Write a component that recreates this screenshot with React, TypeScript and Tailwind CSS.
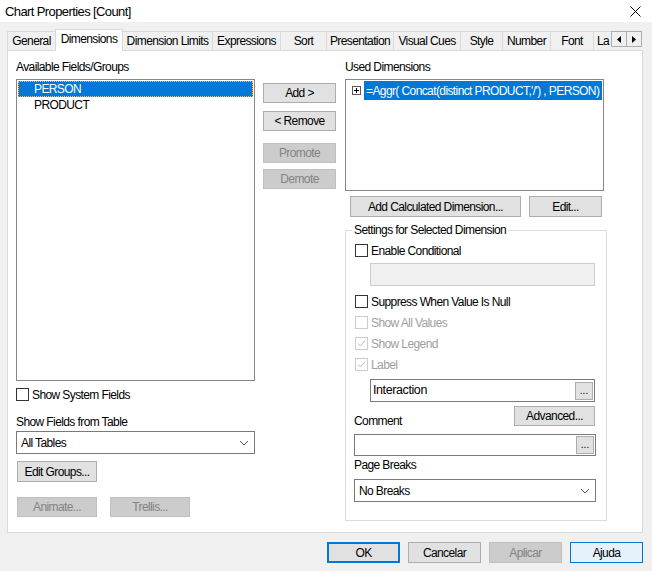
import React from 'react';

const Btn = ({ label, className = '', disabled = false }: { label: string; className?: string; disabled?: boolean }) => (
    <div
        className={`flex items-center justify-center border leading-none ${
            disabled ? 'bg-[#cccccc] border-[#bfbfbf] text-[#838383]' : 'bg-[#e1e1e1] border-[#adadad] text-black'
        } ${className}`}
    >
        {label}
    </div>
);

const Check = ({ label, checked = false, disabled = false, className = '' }: { label: string; checked?: boolean; disabled?: boolean; className?: string }) => (
    <div className={`flex items-center h-[13px] ${className}`}>
        <div
            className={`w-[13px] h-[13px] border bg-white flex items-center justify-center ${
                disabled ? 'border-[#cccccc]' : 'border-[#333333]'
            }`}
        >
            {checked && (
                <svg width="9" height="9" viewBox="0 0 9 9">
                    <path d="M1 4.5 L3.5 7 L8 1.5" fill="none" stroke={disabled ? '#b8b8b8' : '#000'} strokeWidth="1" />
                </svg>
            )}
        </div>
        <span className={`ml-[3px] leading-none ${disabled ? 'text-[#a0a0a0]' : 'text-black'}`}>{label}</span>
    </div>
);

const Chevron = () => (
    <svg width="10" height="6" viewBox="0 0 10 6">
        <path d="M1 1 L5 5 L9 1" fill="none" stroke="#555" strokeWidth="1" />
    </svg>
);

const Tab = ({ label, w, selected = false }: { label: string; w: string; selected?: boolean }) => (
    <div
        className={`-ml-px first:ml-0 flex items-center justify-center whitespace-nowrap border border-b-0 border-[#d9d9d9] ${w} ${
            selected ? 'h-[22px] bg-white -mb-px relative z-10 pb-[3px]' : 'h-[19px] bg-[#f0f0f0]'
        }`}
    >
        {label}
    </div>
);

const Arrow = ({ dir }: { dir: 'l' | 'r' }) => (
    <div className="w-[16px] h-[16px] border border-[#adadad] bg-[#f0f0f0] -ml-px first:ml-0 flex items-center justify-center">
        <svg width="4" height="7" viewBox="0 0 4 7">
            <path d={dir === 'l' ? 'M4 0 L0 3.5 L4 7 Z' : 'M0 0 L4 3.5 L0 7 Z'} fill="#000" />
        </svg>
    </div>
);

const DotsBtn = () => (
    <div className="w-[18px] h-[18px] border border-[#adadad] bg-[#e1e1e1] flex items-end justify-center pb-[3px] text-[10px] tracking-normal leading-none">
        ...
    </div>
);

export default function App() {
    return (
        <div className="w-[652px] h-[571px] bg-[#f0f0f0] flex flex-col overflow-hidden text-[12px] tracking-[-0.6px] text-black font-['Liberation_Sans',Arial,sans-serif]">
            {/* title bar */}
            <div className="h-[22px] bg-white flex items-center justify-between pl-[5px] pr-[11px]">
                <span className="text-[13px] leading-none">Chart Properties [Count]</span>
                <svg width="11" height="11" viewBox="0 0 11 11">
                    <path d="M0.5 0.5 L10.5 10.5 M10.5 0.5 L0.5 10.5" stroke="#000" strokeWidth="1" />
                </svg>
            </div>

            {/* tabs */}
            <div className="mt-[7px] h-[21px] flex items-end pl-[7px]">
                <Tab label="General" w="w-[49px]" />
                <Tab label="Dimensions" w="w-[68px]" selected />
                <Tab label="Dimension Limits" w="w-[91px]" />
                <Tab label="Expressions" w="w-[69px]" />
                <Tab label="Sort" w="w-[47px]" />
                <Tab label="Presentation" w="w-[68px]" />
                <Tab label="Visual Cues" w="w-[68px]" />
                <Tab label="Style" w="w-[43px]" />
                <Tab label="Number" w="w-[49px]" />
                <Tab label="Font" w="w-[44px]" />
                <div className="-ml-px h-[19px] w-[18px] border-t border-l border-[#d9d9d9] flex items-center pl-[3px] whitespace-nowrap">
                    La
                </div>
                <div className="self-start mt-[2px] flex">
                    <Arrow dir="l" />
                    <Arrow dir="r" />
                </div>
            </div>

            {/* panel */}
            <div className="ml-[7px] w-[636px] h-[483px] bg-white border border-[#d9d9d9] flex pl-[8px] pt-[7px]">
                {/* left column */}
                <div className="w-[239px] flex flex-col">
                    <div className="h-[16px] flex items-center pt-[2px]">Available Fields/Groups</div>
                    <div className="mt-[5px] h-[302px] border border-[#828790] p-px flex flex-col">
                        <div className="h-[16px] bg-[#0078d7] text-white flex items-center pl-[16px] outline outline-1 outline-dotted outline-offset-[-1px] outline-[#f5c26b]">
                            PERSON
                        </div>
                        <div className="h-[16px] flex items-center pl-[16px]">PRODUCT</div>
                    </div>
                    <Check label="Show System Fields" className="mt-[7px]" />
                    <div className="mt-[12px] h-[16px] flex items-center pt-px">Show Fields from Table</div>
                    <div className="mt-[2px] h-[23px] border border-[#7a7a7a] flex items-center justify-between pl-[4px] pr-[5px]">
                        <span>All Tables</span>
                        <Chevron />
                    </div>
                    <Btn label="Edit Groups..." className="mt-[7px] ml-px w-[80px] h-[21px]" />
                    <div className="mt-[15px] flex ml-px gap-[13px]">
                        <Btn label="Animate..." disabled className="w-[80px] h-[20px]" />
                        <Btn label="Trellis..." disabled className="w-[80px] h-[20px]" />
                    </div>
                </div>

                {/* middle buttons */}
                <div className="ml-[8px] w-[73px] flex flex-col">
                    <Btn label="Add >" className="mt-[25px] h-[20px]" />
                    <Btn label="< Remove" className="mt-[8px] h-[20px]" />
                    <Btn label="Promote" disabled className="mt-[12px] h-[20px]" />
                    <Btn label="Demote" disabled className="mt-[6px] h-[20px]" />
                </div>

                {/* right column */}
                <div className="ml-[9px] w-[262px] flex flex-col">
                    <div className="h-[16px] flex items-center pt-[2px]">Used Dimensions</div>
                    <div className="mt-[5px] w-[259px] h-[112px] border border-[#828790] p-px">
                        <div className="h-[19px] flex items-center">
                            <div className="ml-[5px] w-[9px] h-[9px] border border-[#5a5a5a] bg-white flex items-center justify-center">
                                <svg width="7" height="7" viewBox="0 0 7 7">
                                    <path d="M1 3.5 H6 M3.5 1 V6" stroke="#000" strokeWidth="1" />
                                </svg>
                            </div>
                            <div className="ml-[3px] flex-1 h-full bg-[#0078d7] text-white flex items-center pl-[2px] whitespace-nowrap overflow-hidden">
                                =Aggr( Concat(distinct PRODUCT,'/') , PERSON)
                            </div>
                        </div>
                    </div>
                    <div className="mt-[5px] flex">
                        <Btn label="Add Calculated Dimension..." className="ml-[5px] w-[171px] h-[21px]" />
                        <Btn label="Edit..." className="ml-[8px] w-[73px] h-[21px]" />
                    </div>

                    <fieldset className="mt-[6px] w-[262px] h-[298px] border border-[#dcdcdc] flex flex-col">
                        <legend className="ml-[6px] px-[2px] h-[14px] leading-[14px]">Settings for Selected Dimension</legend>
                        <div className="flex flex-col pl-[9px]">
                            <Check label="Enable Conditional" className="mt-[7px]" />
                            <div className="mt-[6px] ml-[15px] w-[225px] h-[23px] border border-[#cccccc] bg-[#f0f0f0]" />
                            <Check label="Suppress When Value Is Null" className="mt-[9px]" />
                            <Check label="Show All Values" disabled className="mt-[8px]" />
                            <Check label="Show Legend" checked disabled className="mt-[8px]" />
                            <Check label="Label" checked disabled className="mt-[8px]" />
                            <div className="mt-[8px] ml-[15px] w-[225px] h-[23px] border border-[#7a7a7a] flex items-center justify-between pl-[2px] pr-px">
                                <span className="text-[12.5px] tracking-[-0.4px]">Interaction</span>
                                <DotsBtn />
                            </div>
                            <div className="mt-[4px] -ml-px w-[241px] h-[22px] flex justify-between">
                                <span className="self-end leading-[14px]">Comment</span>
                                <Btn label="Advanced..." className="w-[81px] h-[20px]" />
                            </div>
                            <div className="mt-[6px] -ml-px w-[242px] h-[22px] border border-[#7a7a7a] flex items-center justify-end pr-px">
                                <DotsBtn />
                            </div>
                            <div className="mt-[2px] -ml-px h-[14px] leading-[14px]">Page Breaks</div>
                            <div className="mt-[7px] -ml-px w-[242px] h-[23px] border border-[#7a7a7a] flex items-center justify-between pl-[4px] pr-[5px]">
                                <span>No Breaks</span>
                                <Chevron />
                            </div>
                        </div>
                    </fieldset>
                </div>
            </div>

            {/* bottom buttons */}
            <div className="mt-[9px] flex justify-end pr-[9px] gap-[8px]">
                <Btn label="OK" className="w-[73px] h-[21px] !border-2 !border-[#0078d7]" />
                <Btn label="Cancelar" className="w-[73px] h-[21px]" />
                <Btn label="Aplicar" disabled className="w-[73px] h-[21px]" />
                <Btn label="Ajuda" className="w-[73px] h-[21px] !bg-[#e5f1fb] !border-[#0078d7]" />
            </div>
        </div>
    );
}
